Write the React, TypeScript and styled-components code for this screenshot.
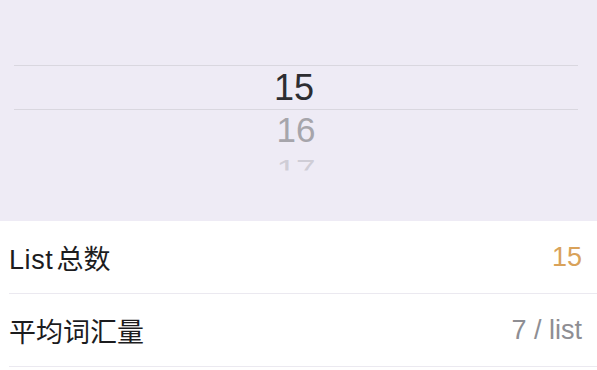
import React from "react";
import styled, { createGlobalStyle } from "styled-components";

const Global = createGlobalStyle`
  html, body { margin: 0; padding: 0; background: #ffffff; }
  body { font-family: "Liberation Sans", "Noto Sans CJK SC", sans-serif; -webkit-font-smoothing: antialiased; }
`;

const Page = styled.div`
  width: 597px;
  height: 370px;
  overflow: hidden;
  display: flex;
  flex-direction: column;
`;

const PickerArea = styled.div`
  height: 221px;
  background: #eeebf5;
  padding-top: 65px;
  box-sizing: border-box;
  display: flex;
  flex-direction: column;
  overflow: hidden;
`;

const Band = styled.div`
  margin: 0 19px 0 14px;
  height: 45px;
  border-top: 1.5px solid #d9d7df;
  border-bottom: 1.5px solid #d9d7df;
  box-sizing: border-box;
  display: flex;
  align-items: center;
  justify-content: center;
`;

const Item = styled.div<{ $color: string; $height: number; $scale?: number }>`
  height: ${(p) => p.$height}px;
  display: flex;
  align-items: flex-start;
  justify-content: center;
  overflow: hidden;
  color: ${(p) => p.$color};
  font-size: 35px;
  line-height: 40px;
  margin-left: -5px;
  transform: scaleY(${(p) => p.$scale ?? 1});
  transform-origin: top;
`;

const Selected = styled.span`
  font-size: 36px;
  line-height: 42px;
  color: #2d2d31;
  margin-left: -4px;
`;

const List = styled.div`
  flex: 1;
  display: flex;
  flex-direction: column;
  padding-left: 9px;
`;

const Row = styled.div`
  height: 73px;
  display: flex;
  align-items: center;
  justify-content: space-between;
  padding-right: 15px;
  border-bottom: 1.5px solid #ebe9f0;
  box-sizing: border-box;
  font-size: 27px;
`;

const Label = styled.span`
  color: #1c1c1e;
`;

const Latin = styled.span`
  letter-spacing: 0.6px;
  margin-right: 3px;
`;

const Value = styled.span<{ $color: string }>`
  color: ${(p) => p.$color};
`;

export default function App() {
  return (
    <Page>
      <Global />
      <PickerArea>
        <Band>
          <Selected>15</Selected>
        </Band>
        <Item $color="#a6a5ab" $height={44}>16</Item>
        <Item $color="#cfcdd6" $height={22} $scale={0.75}>17</Item>
      </PickerArea>
      <List>
        <Row>
          <Label>
            <Latin>List</Latin>总数
          </Label>
          <Value $color="#d9a25a">15</Value>
        </Row>
        <Row>
          <Label>平均词汇量</Label>
          <Value $color="#8e8e93">7 / list</Value>
        </Row>
      </List>
    </Page>
  );
}
